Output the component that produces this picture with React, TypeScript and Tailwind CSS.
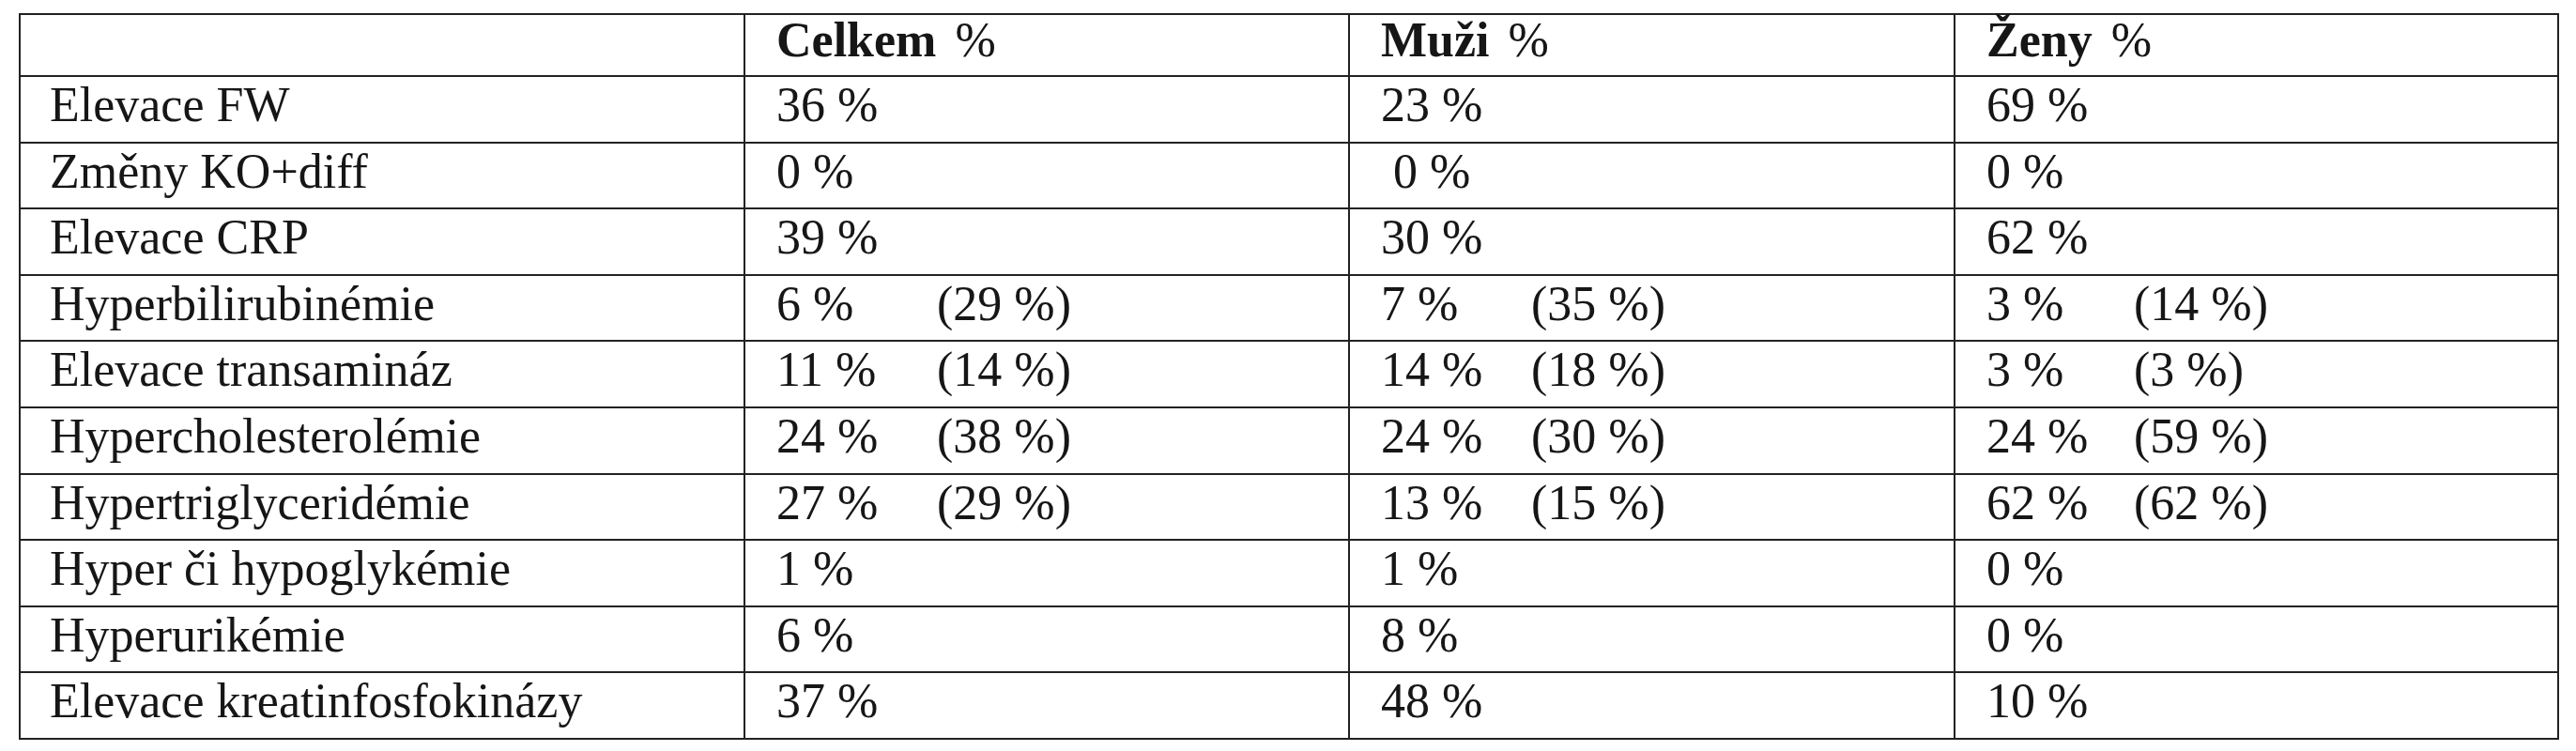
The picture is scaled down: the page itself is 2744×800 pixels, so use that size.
type Cell = { main: string; paren?: string };

interface Row {
  label: string;
  values: Cell[];
}

const rows: Row[] = [
  { label: "Elevace FW", values: [{ main: "36 %" }, { main: "23 %" }, { main: "69 %" }] },
  { label: "Změny KO+diff", values: [{ main: "0 %" }, { main: "\u00a00 %" }, { main: "0 %" }] },
  { label: "Elevace CRP", values: [{ main: "39 %" }, { main: "30 %" }, { main: "62 %" }] },
  {
    label: "Hyperbilirubinémie",
    values: [
      { main: "6 %", paren: "(29 %)" },
      { main: "7 %", paren: "(35 %)" },
      { main: "3 %", paren: "(14 %)" },
    ],
  },
  {
    label: "Elevace transamináz",
    values: [
      { main: "11 %", paren: "(14 %)" },
      { main: "14 %", paren: "(18 %)" },
      { main: "3 %", paren: "(3 %)" },
    ],
  },
  {
    label: "Hypercholesterolémie",
    values: [
      { main: "24 %", paren: "(38 %)" },
      { main: "24 %", paren: "(30 %)" },
      { main: "24 %", paren: "(59 %)" },
    ],
  },
  {
    label: "Hypertriglyceridémie",
    values: [
      { main: "27 %", paren: "(29 %)" },
      { main: "13 %", paren: "(15 %)" },
      { main: "62 %", paren: "(62 %)" },
    ],
  },
  { label: "Hyper či hypoglykémie", values: [{ main: "1 %" }, { main: "1 %" }, { main: "0 %" }] },
  { label: "Hyperurikémie", values: [{ main: "6 %" }, { main: "8 %" }, { main: "0 %" }] },
  { label: "Elevace kreatinfosfokinázy", values: [{ main: "37 %" }, { main: "48 %" }, { main: "10 %" }] },
];

// tab stop of the bracketed value, per column
const tabWidths = ["w-[171px]", "w-[160px]", "w-[157px]"];

const headers = ["Celkem", "Muži", "Ženy"];

export default function App() {
  return (
    <div className="min-h-[800px] bg-white pl-[20px] pt-[14px] font-['Liberation_Serif','Times_New_Roman',serif] text-[52px] leading-none text-[#161616]">
      <table className="w-[2704px] table-fixed border-collapse">
        <colgroup>
          <col className="w-[772px]" />
          <col className="w-[644px]" />
          <col className="w-[645px]" />
          <col className="w-[643px]" />
        </colgroup>
        <thead>
          <tr className="h-[66px]">
            <th className="border-2 border-[#222]" />
            {headers.map((h) => (
              <th
                key={h}
                className="border-2 border-[#222] pl-[33px] pt-[1px] text-left align-top font-bold"
              >
                {h}
                <span className="ml-[20px] font-normal">%</span>
              </th>
            ))}
          </tr>
        </thead>
        <tbody>
          {rows.map((r) => (
            <tr key={r.label} className="h-[70.6px]">
              <td className="border-2 border-[#222] pl-[31px] pt-[4px] align-top whitespace-nowrap">
                {r.label}
              </td>
              {r.values.map((v, i) => (
                <td
                  key={i}
                  className="border-2 border-[#222] pl-[33px] pt-[4px] align-top whitespace-nowrap"
                >
                  {v.paren ? (
                    <div className="flex">
                      <span className={tabWidths[i]}>{v.main}</span>
                      <span>{v.paren}</span>
                    </div>
                  ) : (
                    v.main
                  )}
                </td>
              ))}
            </tr>
          ))}
        </tbody>
      </table>
    </div>
  );
}
